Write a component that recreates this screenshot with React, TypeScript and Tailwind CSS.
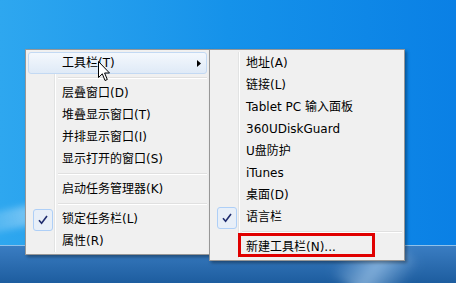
import React from "react";

const font = { fontFamily: '"DejaVu Sans", "Noto Sans CJK SC", sans-serif' };

function Check() {
  return (
    <div className="absolute left-[4px] top-0 w-[20px] h-[22px] rounded-[3px] border border-[#aecff7] bg-[#e8eff8] flex items-center justify-center">
      <svg width="10" height="10" viewBox="0 0 10 10">
        <path d="M1 5.2 L3.6 8.3 L9 1" fill="none" stroke="#1f2c6e" strokeWidth="1.6" />
      </svg>
    </div>
  );
}

function Item({
  label,
  checked,
  highlight,
  arrow,
}: {
  label: string;
  checked?: boolean;
  highlight?: boolean;
  arrow?: boolean;
}) {
  return (
    <div
      className={
        "relative h-[22px] flex items-center pl-[33px] pr-2 " +
        (highlight
          ? "rounded-[3px] border border-[#c3d9f3] bg-gradient-to-b from-[#f4f8fd] to-[#dfeaf7]"
          : "border border-transparent")
      }
    >
      {checked && <Check />}
      <span className="text-[12px] text-black leading-none whitespace-nowrap">{label}</span>
      {arrow && (
        <svg className="absolute right-[5px] top-[7px]" width="4" height="7" viewBox="0 0 4 7">
          <path d="M0 0 L4 3.5 L0 7 Z" fill="#000" />
        </svg>
      )}
    </div>
  );
}

function Sep() {
  return (
    <div className="h-[8px] flex items-center pl-[30px]">
      <div className="w-full h-[2px] border-t border-[#e0e0e0] border-b border-b-white" />
    </div>
  );
}

function Menu({ className, children }: { className: string; children: React.ReactNode }) {
  return (
    <div
      className={
        "absolute bg-[#f0f0f0] border border-[#979797] p-[2px] shadow-[2px_2px_3px_rgba(0,0,0,0.35)] " +
        className
      }
    >
      <div className="absolute top-[2px] bottom-[2px] left-[28px] w-[2px] border-l border-[#e2e3e3] border-r border-r-white" />
      <div className="relative flex flex-col">{children}</div>
    </div>
  );
}

export default function App() {
  return (
    <div
      className="relative w-[456px] h-[283px] overflow-hidden flex flex-col bg-gradient-to-r from-[#2ea7ef] via-[#1592ea] to-[#0a80e5]"
      style={font}
    >
      <div className="flex-1 relative">
        <div className="absolute -left-[40px] top-[205px] w-[140px] h-[20px] rotate-[-12deg] bg-gradient-to-r from-transparent via-[rgba(255,255,255,0.35)] to-transparent blur-[3px]" />
      </div>
      <div className="h-[38px] border-t border-[#8fc1ea] bg-gradient-to-b from-[#3a7dc2] to-[#1d5d9f] relative">
        <div className="absolute left-[340px] top-[-8px] w-[70px] h-[60px] rotate-[35deg] bg-gradient-to-r from-transparent via-[rgba(200,230,255,0.55)] to-transparent blur-[4px]" />
      </div>

      <Menu className="left-[25px] top-[49px] w-[185px]">
        <Item label="工具栏(T)" highlight arrow />
        <Sep />
        <Item label="层叠窗口(D)" />
        <Item label="堆叠显示窗口(T)" />
        <Item label="并排显示窗口(I)" />
        <Item label="显示打开的窗口(S)" />
        <Sep />
        <Item label="启动任务管理器(K)" />
        <Sep />
        <Item label="锁定任务栏(L)" checked />
        <Item label="属性(R)" />
      </Menu>

      <Menu className="left-[209px] top-[49px] w-[196px]">
        <Item label="地址(A)" />
        <Item label="链接(L)" />
        <Item label="Tablet PC 输入面板" />
        <Item label="360UDiskGuard" />
        <Item label="U盘防护" />
        <Item label="iTunes" />
        <Item label="桌面(D)" />
        <Item label="语言栏" checked />
        <Sep />
        <Item label="新建工具栏(N)..." />
        <div className="absolute left-[26px] top-[181px] w-[137px] h-[24px] border-[3px] border-[#e00000]" />
      </Menu>

      <svg className="absolute left-[98px] top-[61px]" width="13" height="21" viewBox="0 0 13 21">
        <path
          d="M0.5 0.5 L0.5 16.5 L4.3 12.8 L7 19.5 L9.3 18.5 L6.6 12 L11.5 12 Z"
          fill="#fff"
          stroke="#000"
          strokeWidth="1"
          strokeLinejoin="round"
        />
      </svg>
    </div>
  );
}
